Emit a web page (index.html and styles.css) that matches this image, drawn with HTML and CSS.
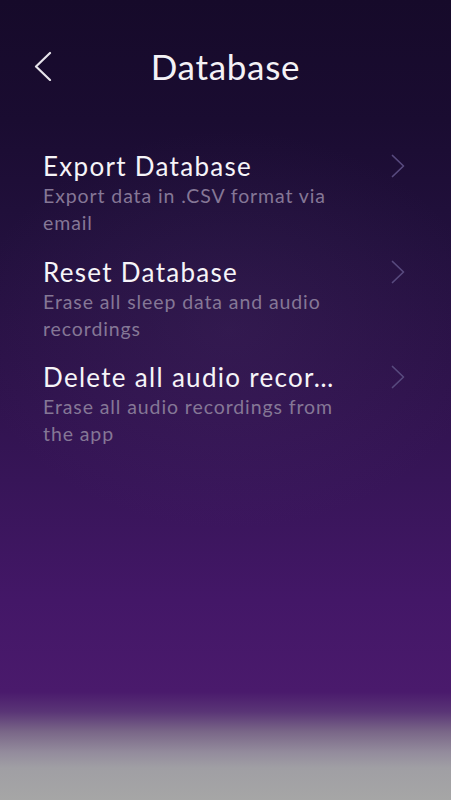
FILE: index.html
```html
<!DOCTYPE html>
<html lang="en">
<head>
<meta charset="utf-8">
<title>Database</title>
<link rel="stylesheet" href="styles.css">
</head>
<body>
<div class="screen">
  <header class="nav">
    <button class="back" aria-label="Back">
      <svg width="20" height="30" viewBox="0 0 20 30"><path d="M17 2 L3 15.5 L17 29" fill="none" stroke="#e6e3ea" stroke-width="2.2" stroke-linecap="round" stroke-linejoin="round"/></svg>
    </button>
    <h1 class="title">Database</h1>
  </header>
  <ul class="list">
    <li class="item">
      <div class="text">
        <div class="item-title">Export Database</div>
        <div class="item-sub">Export data in .CSV format via email</div>
      </div>
      <svg class="chev" width="14" height="24" viewBox="0 0 14 24"><path d="M1.5 1.5 L12.5 12 L1.5 22.5" fill="none" stroke="#584a7e" stroke-width="1.7" stroke-linecap="round" stroke-linejoin="round"/></svg>
    </li>
    <li class="item">
      <div class="text">
        <div class="item-title">Reset Database</div>
        <div class="item-sub">Erase all sleep data and audio recordings</div>
      </div>
      <svg class="chev" width="14" height="24" viewBox="0 0 14 24"><path d="M1.5 1.5 L12.5 12 L1.5 22.5" fill="none" stroke="#584a7e" stroke-width="1.7" stroke-linecap="round" stroke-linejoin="round"/></svg>
    </li>
    <li class="item">
      <div class="text">
        <div class="item-title">Delete all audio recor…</div>
        <div class="item-sub">Erase all audio recordings from the app</div>
      </div>
      <svg class="chev" width="14" height="24" viewBox="0 0 14 24"><path d="M1.5 1.5 L12.5 12 L1.5 22.5" fill="none" stroke="#584a7e" stroke-width="1.7" stroke-linecap="round" stroke-linejoin="round"/></svg>
    </li>
  </ul>
</div>
</body>
</html>
```
FILE: styles.css
```css
* { box-sizing: border-box; }
html, body { margin: 0; padding: 0; }
body {
  width: 451px;
  height: 800px;
  overflow: hidden;
  font-family: Lato, "Open Sans", sans-serif;
}
.screen {
  width: 451px;
  height: 800px;
  padding-top: 36px;
  background:
    radial-gradient(ellipse 260px 200px at 230px 330px, rgba(90, 60, 120, 0.18), rgba(90, 60, 120, 0) 100%),
    linear-gradient(180deg, #160a2a 0%, #1a0c31 15%, #22103d 30%, #2c1249 45%, #371558 60%, #431767 75%, #4a1a6c 86.5%, #5a3576 89%, #7a6788 91.5%, #938b9c 94%, #a09fa4 96%, #a6a6a6 100%);
}
.nav {
  display: flex;
  align-items: center;
  justify-content: center;
  height: 60px;
  position: relative;
}
.back {
  position: absolute;
  left: 33px;
  top: 15px;
  background: none;
  border: 0;
  padding: 0;
  line-height: 0;
}
.title {
  margin: 0;
  font-weight: 400;
  font-size: 35px;
  color: #f4f2f6;
  letter-spacing: 0.7px;
}
.list {
  list-style: none;
  margin: 54px 0 0;
  padding: 0 46px 0 43px;
  display: flex;
  flex-direction: column;
  gap: 19.5px;
}
.item {
  display: flex;
  align-items: flex-start;
  justify-content: space-between;
}
.text { width: 320px; }
.item-title {
  font-size: 26px;
  line-height: 32px;
  color: #f6f4f8;
  white-space: nowrap;
  letter-spacing: 1.3px;
}
.item-sub {
  font-size: 19.5px;
  line-height: 27px;
  color: #857796;
  letter-spacing: 0.9px;
}
.chev { margin-top: 4px; }
```
